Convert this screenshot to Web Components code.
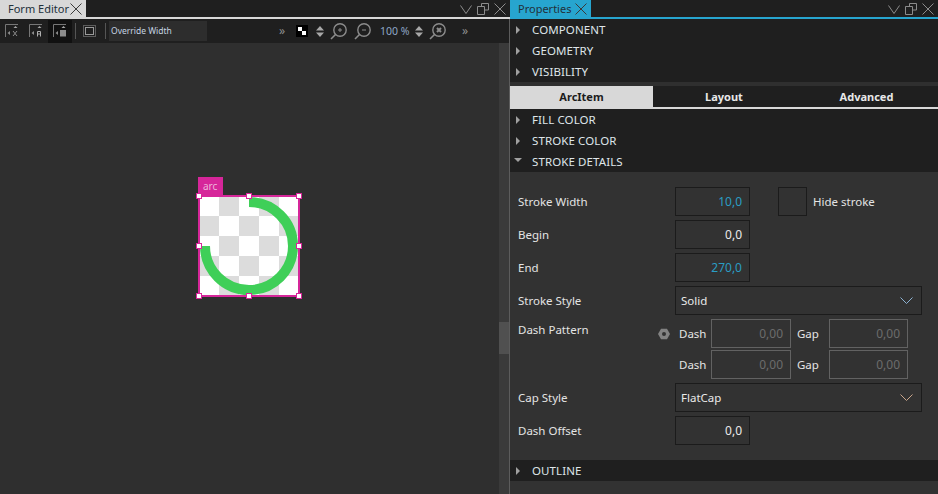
<!DOCTYPE html>
<html>
<head>
<meta charset="utf-8">
<title>Form Editor</title>
<style>
    html, body { margin: 0; padding: 0; height: 100%; overflow: hidden; background: #323232; }
    body { font-family: "Noto Sans", "Open Sans", sans-serif; font-size: 11.5px; color: #e4e4e4; }
    #app { display: flex; width: 938px; height: 494px; }
</style>
</head>
<body>
<div id="app">
    <form-editor-pane></form-editor-pane>
    <properties-pane></properties-pane>
</div>

<script>
const ICON_V = '<svg width="12" height="12" viewBox="0 0 12 12" fill="none" stroke="#8c8c8c"><path d="M.5 2.5 6 10.5 11.5 2.5"/></svg>';
const ICON_RESTORE = '<svg width="12" height="12" viewBox="0 0 12 12" fill="none" stroke="#8c8c8c"><path d="M.5 3.5H7.5V11.5H.5ZM4.5 3V.5H11.5V7H8"/></svg>';
const ICON_X = '<svg width="12" height="12" viewBox="0 0 12 12" fill="none" stroke="#8c8c8c"><path d="M.5.5 11.5 11.5M11.5.5.5 11.5"/></svg>';

class DockHeader extends HTMLElement {
    connectedCallback() {
        const color = this.getAttribute('color') || '#d8d8d8';
        this.attachShadow({ mode: 'open' });
        this.shadowRoot.innerHTML = `
            <style>
                :host { display: flex; height: 17px; background: #1f1f1f; border-bottom: 2px solid ${color}; }
                .tab {
                    display: flex; align-items: center; box-sizing: border-box; height: 17px;
                    width: ${this.getAttribute('tab-width')}px; padding-left: 8px;
                    background: ${color}; color: #22303a; font-size: 11px;
                }
                .tab span { flex: 1; }
                .tab svg { margin-right: 4px; }
                .tab svg path { stroke: #3a3a3a; }
                .tools { margin-left: auto; display: flex; align-items: center; gap: 5px; padding-right: 4px; }
            </style>
            <div class="tab"><span>${this.getAttribute('label')}</span>${ICON_X}</div>
            <div class="tools">${ICON_V}${ICON_RESTORE}${ICON_X}</div>
        `;
    }
}

class ToolIcon extends HTMLElement {
    connectedCallback() {
        const kind = this.getAttribute('kind');
        const glyphs = {
            x: '<path d="M8 7 12 12M12 7 8 12" stroke="#8c8c8c" fill="none"/>',
            a: '<path d="M8.5 12.5V7.5H11.5V12.5M8.5 10H11.5" stroke="#b0b0b0" fill="none"/>',
            fill: '<rect x="7" y="6" width="6" height="6.5" fill="#8c8c8c"/>'
        };
        this.attachShadow({ mode: 'open' });
        this.shadowRoot.innerHTML = `
            <style>
                :host { display: flex; align-items: center; justify-content: center; width: 24px; height: 23px; }
                :host([pressed]) { background: #111; }
                svg { display: block; }
            </style>
            <svg width="14" height="14" viewBox="0 0 14 14">
                <path d="M.5 13V.5H13" fill="none" stroke="#777"/>
                <path d="M8.5 4 10.5 2 12.5 4Z" fill="#a8a8a8"/>
                <path d="M5 7 2.5 9 5 11Z" fill="#8c8c8c"/>
                ${glyphs[kind]}
            </svg>
        `;
    }
}

class ZoomIcon extends HTMLElement {
    connectedCallback() {
        const kind = this.getAttribute('kind');
        const inner = {
            plus: '<path d="M8 7H12M10 5V9" stroke="#8c8c8c" fill="none"/>',
            minus: '<path d="M8 7H12" stroke="#8c8c8c" fill="none"/>',
            fit: '<path d="M8 5 12 9M12 5 8 9" stroke="#8c8c8c" stroke-width="2" fill="none"/>'
        };
        this.attachShadow({ mode: 'open' });
        this.shadowRoot.innerHTML = `
            <style>:host { display: block; width: 18px; height: 17px; } svg { display: block; }</style>
            <svg width="18" height="17" viewBox="0 0 18 17" fill="none" stroke="#8c8c8c">
                <circle cx="10" cy="7" r="6.2" stroke-width="1.4"/>
                <path d="M5.5 11.5 1 16" stroke-width="1.6"/>
                ${inner[kind]}
            </svg>
        `;
    }
}

class UpDown extends HTMLElement {
    connectedCallback() {
        this.attachShadow({ mode: 'open' });
        this.shadowRoot.innerHTML = `
            <style>:host { display: block; width: 8px; height: 11px; } svg { display: block; }</style>
            <svg width="8" height="11" viewBox="0 0 8 11" fill="#a8a8a8"><path d="M0 4.5 4 0 8 4.5ZM0 6.5 4 11 8 6.5Z"/></svg>
        `;
    }
}

class FormToolbar extends HTMLElement {
    connectedCallback() {
        this.attachShadow({ mode: 'open' });
        this.shadowRoot.innerHTML = `
            <style>
                :host { display: flex; align-items: center; height: 24px; background: #1f1f1f; box-sizing: border-box; }
                tool-icon:first-child { margin-left: 1px; }
                .sep { width: 1px; height: 16px; background: #555; }
                .frame { display: block; margin-left: 7px; margin-right: 9px; }
                .field {
                    width: 98px; height: 20px; line-height: 20px; margin-left: 3px; padding-left: 2px;
                    box-sizing: border-box; background: #2d2d2d; color: #c6d4e2; font-size: 8.5px;
                }
                .more { color: #8f8f8f; font-size: 12px; width: 8px; line-height: 12px; }
                .swatch { display: block; }
                .pct { color: #8ea6c6; font-size: 10.5px; width: 30px; }
            </style>
            <tool-icon kind="x"></tool-icon>
            <tool-icon kind="a"></tool-icon>
            <tool-icon kind="fill" pressed></tool-icon>
            <div class="sep" style="margin-left:3px"></div>
            <svg class="frame" width="13" height="12" viewBox="0 0 13 12" fill="none" stroke="#9a9a9a">
                <rect x=".5" y=".5" width="12" height="11" stroke-dasharray="1 1"/>
                <rect x="2.5" y="2.5" width="8" height="7"/>
            </svg>
            <div class="sep"></div>
            <div class="field">Override Width</div>
            <div class="more" style="margin-left:72px">»</div>
            <svg class="swatch" style="margin-left:9px" width="12" height="12" viewBox="0 0 12 12">
                <rect width="12" height="12" fill="#000"/>
                <rect x="2" y="2" width="4" height="4" fill="#fff"/>
                <rect x="6" y="6" width="4" height="4" fill="#fff"/>
            </svg>
            <up-down style="margin-left:8px"></up-down>
            <zoom-icon kind="plus" style="margin-left:6px"></zoom-icon>
            <zoom-icon kind="minus" style="margin-left:6px"></zoom-icon>
            <div class="pct" style="margin-left:8px">100 %</div>
            <up-down style="margin-left:5px"></up-down>
            <zoom-icon kind="fit" style="margin-left:6px"></zoom-icon>
            <div class="more" style="margin-left:15px">»</div>
        `;
    }
}

class ArcItem extends HTMLElement {
    connectedCallback() {
        const spots = [-4, 46, 96];
        let handles = '';
        spots.forEach((top) => {
            spots.forEach((left) => {
                if (top === 46 && left === 46) return;
                handles += `<i style="left:${left}px;top:${top}px"></i>`;
            });
        });
        this.attachShadow({ mode: 'open' });
        this.shadowRoot.innerHTML = `
            <style>
                :host {
                    position: absolute; left: 198px; top: 152px; width: 98px; height: 98px;
                    border: 2px solid #d6269a;
                    background-color: #fff;
                    background-image: conic-gradient(#dcdcdc 25%, transparent 0 50%, #dcdcdc 0 75%, transparent 0);
                    background-size: 40px 40px;
                    background-position: -1px -1px;
                }
                .name {
                    position: absolute; left: -2px; top: -20px; width: 25px; height: 18px;
                    background: #d6269a; color: #eeb3da; font-size: 10px; line-height: 18px;
                    padding-left: 5px; box-sizing: border-box;
                }
                svg { position: absolute; left: 0; top: 0; }
                i {
                    position: absolute; width: 6px; height: 6px; box-sizing: border-box;
                    background: #fff; border: 1px solid #d6269a;
                }
            </style>
            <div class="name">arc</div>
            <svg width="98" height="98" viewBox="0 0 98 98" fill="none">
                <path d="M49 5A44 44 0 1 1 5 49" stroke="#3fcf58" stroke-width="10"/>
            </svg>
            ${handles}
        `;
    }
}

class FormEditorPane extends HTMLElement {
    connectedCallback() {
        this.attachShadow({ mode: 'open' });
        this.shadowRoot.innerHTML = `
            <style>
                :host { display: flex; flex-direction: column; width: 510px; height: 494px; flex: none; }
                .toolwrap { border-right: 1px solid #5c5c5c; }
                .body { flex: 1; display: flex; border-right: 1px solid #5c5c5c; }
                .canvas { position: relative; flex: 1; background: #2f2f2f; }
                .track { width: 10px; background: #3a3a3a; padding-top: 279px; box-sizing: border-box; }
                .thumb { height: 32px; background: #505050; }
            </style>
            <dock-header label="Form Editor" tab-width="86"></dock-header>
            <div class="toolwrap"><form-toolbar></form-toolbar></div>
            <div class="body">
                <div class="canvas"><arc-item></arc-item></div>
                <div class="track"><div class="thumb"></div></div>
            </div>
        `;
    }
}

class SectionHead extends HTMLElement {
    connectedCallback() {
        const open = this.hasAttribute('open');
        const arrow = open
            ? '<path d="M0 0H8L4 4Z"/>'
            : '<path d="M2 0 6 4 2 8Z"/>';
        this.attachShadow({ mode: 'open' });
        this.shadowRoot.innerHTML = `
            <style>
                :host {
                    display: flex; align-items: center; height: 21px; background: #1f1f1f;
                    padding-left: 4px; font-size: 11.5px; color: #dfe6ea; letter-spacing: .1px;
                }
                svg { flex: none; width: 8px; margin-right: 10px; }
            </style>
            <svg width="8" height="8" viewBox="0 0 8 8" fill="#a0a0a0">${arrow}</svg>
            <slot></slot>
        `;
    }
}

class SectionTabs extends HTMLElement {
    connectedCallback() {
        this.attachShadow({ mode: 'open' });
        this.shadowRoot.innerHTML = `
            <style>
                :host {
                    display: grid; grid-template-columns: 143px 142px 143px; height: 21px;
                    background: #1f1f1f; border-bottom: 2px solid #d8d8d8;
                    font-size: 11px; font-weight: 700; color: #e8e8e8;
                }
                div { display: flex; align-items: center; justify-content: center; }
                .on { background: #d8d8d8; color: #1c1c1c; }
            </style>
            <div class="on">ArcItem</div>
            <div>Layout</div>
            <div>Advanced</div>
        `;
    }
}

class SpinBox extends HTMLElement {
    connectedCallback() {
        this.attachShadow({ mode: 'open' });
        this.shadowRoot.innerHTML = `
            <style>
                :host {
                    display: flex; align-items: center; justify-content: flex-end; box-sizing: border-box;
                    width: 75px; height: 29px; padding-right: 7px;
                    border: 1px solid #1b1b1b; color: #eaeaea; font-size: 12px;
                }
                :host([modified]) { color: #2a9dc4; }
                :host([disabled]) { width: 80px; border-color: #626262; color: #6c6c6c; }
            </style>
            <slot></slot>
        `;
    }
}

class ComboBox extends HTMLElement {
    connectedCallback() {
        const chev = this.getAttribute('chevron') || '#8db2d2';
        this.attachShadow({ mode: 'open' });
        this.shadowRoot.innerHTML = `
            <style>
                :host {
                    display: flex; align-items: center; justify-content: space-between; box-sizing: border-box;
                    width: 247px; height: 29px; padding: 0 8px 0 5px;
                    border: 1px solid #1b1b1b; color: #eaeaea; font-size: 11.5px;
                }
            </style>
            <slot></slot>
            <svg width="13" height="7" viewBox="0 0 13 7" fill="none" stroke="${chev}"><path d="M.5.5 6.5 6.5 12.5.5"/></svg>
        `;
    }
}

class PropRow extends HTMLElement {
    connectedCallback() {
        this.attachShadow({ mode: 'open' });
        this.shadowRoot.innerHTML = `
            <style>
                :host { display: flex; align-items: center; height: 29px; }
                .label { width: 157px; flex: none; font-size: 11.5px; color: #e4e4e4; }
                .check { width: 29px; height: 29px; box-sizing: border-box; border: 1px solid #1b1b1b; margin-left: 28px; }
                .side { margin-left: 6px; font-size: 11.5px; }
            </style>
            <div class="label">${this.getAttribute('label')}</div>
            <slot></slot>
            ${this.hasAttribute('check') ? `<div class="check"></div><div class="side">${this.getAttribute('check')}</div>` : ''}
        `;
    }
}

class DashPattern extends HTMLElement {
    connectedCallback() {
        const row = `
            <span>Dash</span><spin-box disabled>0,00</spin-box>
            <span class="gap">Gap</span><spin-box disabled style="width:79px">0,00</spin-box>
        `;
        this.attachShadow({ mode: 'open' });
        this.shadowRoot.innerHTML = `
            <style>
                :host { display: flex; height: 60px; }
                .label { width: 140px; flex: none; padding-top: 3px; font-size: 11.5px; }
                .hex { flex: none; width: 12px; margin: 9px 11px 0 0; display: block; }
                .grid {
                    display: grid; grid-template-columns: 32px 80px 38px 79px; column-gap: 0; row-gap: 2px;
                    align-items: center; margin-left: 0; height: 60px; font-size: 11.5px; padding-left: 0;
                    grid-auto-rows: 29px;
                }
                .gap { padding-left: 6px; }
                span:first-child { padding-left: 0; }
            </style>
            <div class="label">Dash Pattern</div>
            <svg class="hex" width="12" height="12" viewBox="0 0 12 12">
                <path fill-rule="evenodd" fill="#828282" d="M3 .8H9L12 6 9 11.2H3L0 6ZM6 4A2 2 0 1 0 6 8 2 2 0 0 0 6 4Z"/>
            </svg>
            <div class="grid" style="margin-left:-2px;padding-left:0">${row}${row}</div>
        `;
    }
}

class PropertiesPane extends HTMLElement {
    connectedCallback() {
        this.attachShadow({ mode: 'open' });
        this.shadowRoot.innerHTML = `
            <style>
                :host { display: flex; flex-direction: column; width: 428px; height: 494px; background: #323232; }
                .gap { height: 4px; background: #2f2f2f; }
                .form { display: flex; flex-direction: column; gap: 4px; box-sizing: border-box; height: 288px; padding: 15px 0 0 8px; }
            </style>
            <dock-header label="Properties" tab-width="81" color="#27a5cf"></dock-header>
            <section-head>COMPONENT</section-head>
            <section-head>GEOMETRY</section-head>
            <section-head>VISIBILITY</section-head>
            <div class="gap"></div>
            <section-tabs></section-tabs>
            <section-head>FILL COLOR</section-head>
            <section-head>STROKE COLOR</section-head>
            <section-head open>STROKE DETAILS</section-head>
            <div class="form">
                <prop-row label="Stroke Width" check="Hide stroke"><spin-box modified>10,0</spin-box></prop-row>
                <prop-row label="Begin"><spin-box>0,0</spin-box></prop-row>
                <prop-row label="End"><spin-box modified>270,0</spin-box></prop-row>
                <prop-row label="Stroke Style"><combo-box>Solid</combo-box></prop-row>
                <dash-pattern></dash-pattern>
                <prop-row label="Cap Style"><combo-box chevron="#c9a58a">FlatCap</combo-box></prop-row>
                <prop-row label="Dash Offset"><spin-box>0,0</spin-box></prop-row>
            </div>
            <section-head>OUTLINE</section-head>
        `;
    }
}

customElements.define('dock-header', DockHeader);
customElements.define('tool-icon', ToolIcon);
customElements.define('zoom-icon', ZoomIcon);
customElements.define('up-down', UpDown);
customElements.define('form-toolbar', FormToolbar);
customElements.define('arc-item', ArcItem);
customElements.define('form-editor-pane', FormEditorPane);
customElements.define('section-head', SectionHead);
customElements.define('section-tabs', SectionTabs);
customElements.define('spin-box', SpinBox);
customElements.define('combo-box', ComboBox);
customElements.define('prop-row', PropRow);
customElements.define('dash-pattern', DashPattern);
customElements.define('properties-pane', PropertiesPane);
</script>
</body>
</html>
